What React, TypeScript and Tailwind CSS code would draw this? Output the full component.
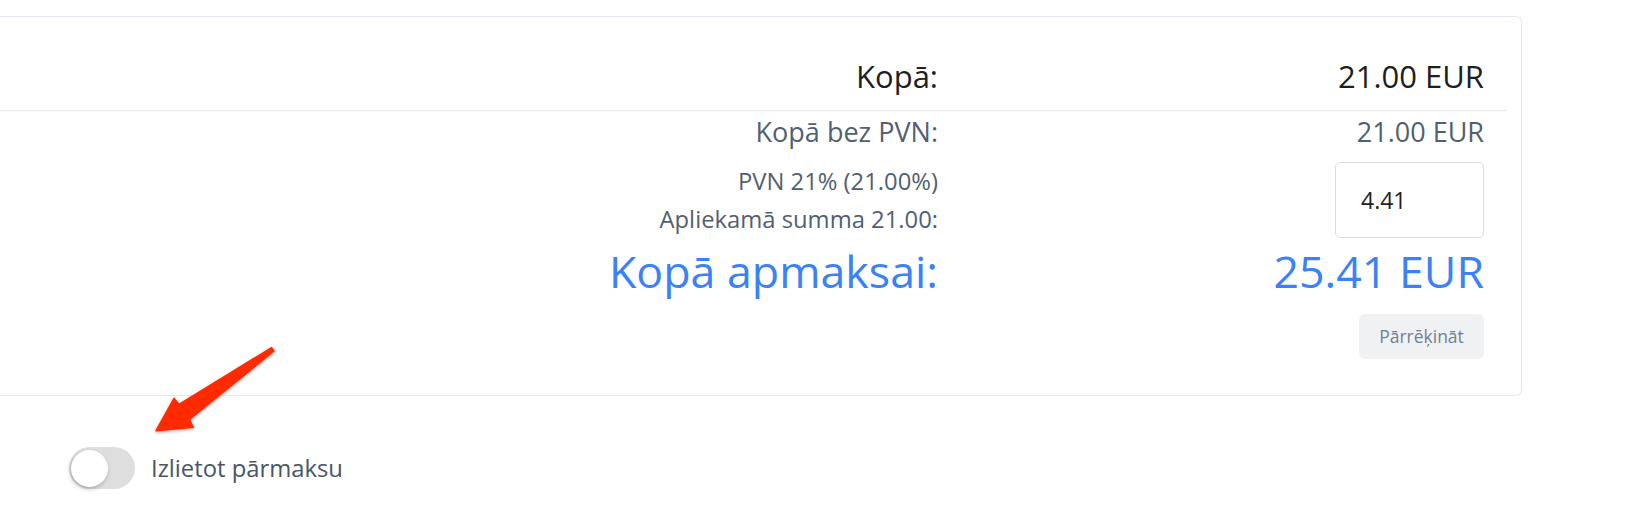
import React from "react";

export default function App() {
  return (
    <div className="relative w-[1626px] h-[516px] bg-white font-['Open_Sans',sans-serif] overflow-hidden">
      <div className="pt-4">
        <div className="w-[1522px] border border-l-0 border-[#e6e6f0] rounded-r-md bg-white pr-[14px]">
          {/* Row 1 */}
          <div className="flex border-b border-[#e8e8e8] pt-[39px] pb-[14px] pr-[23px]">
            <div className="w-[938px] text-right text-[31px] leading-[40px] text-[#1f1f1f]">Kopā:</div>
            <div className="flex-1 text-right text-[31px] leading-[40px] text-[#1f1f1f]">21.00 EUR</div>
          </div>
          {/* Row 2 */}
          <div className="flex pt-[3px] pr-[23px] h-[39px]">
            <div className="w-[938px] text-right text-[27px] leading-[36px] text-[#525f70]">Kopā bez PVN:</div>
            <div className="flex-1 text-right text-[27px] leading-[36px] text-[#525f70]">21.00 EUR</div>
          </div>
          {/* Row 3 */}
          <div className="flex mt-[12px] pr-[23px]">
            <div className="w-[938px] text-right text-[23.8px] leading-[38px] text-[#525f70]">
              <div>PVN 21% (21.00%)</div>
              <div>Apliekamā summa 21.00:</div>
            </div>
            <div className="flex-1 flex justify-end">
              <div className="w-[149px] h-[76px] border border-[#dcdcdc] rounded-[5px] bg-white flex items-center pl-[25px] text-[23px] text-[#1f1f1f]">
                4.41
              </div>
            </div>
          </div>
          {/* Row 4 */}
          <div className="flex mt-[5px] pr-[23px]">
            <div className="w-[938px] text-right text-[44.7px] leading-[56px] text-[#3b82f6]">Kopā apmaksai:</div>
            <div className="flex-1 text-right text-[44.7px] leading-[56px] text-[#3b82f6]">25.41 EUR</div>
          </div>
          {/* Row 5 */}
          <div className="flex justify-end mt-[15px] pb-[36px] pr-[23px]">
            <button className="w-[125px] h-[45px] rounded-md bg-[#f0f1f3] text-[17.5px] text-[#718096] flex items-center justify-center">
              Pārrēķināt
            </button>
          </div>
        </div>
      </div>

      {/* Toggle */}
      <div className="flex items-center gap-4 pl-[69px] mt-[51px]">
        <div className="relative w-[66px] h-[42px] rounded-full bg-[#dedede]">
          <div className="absolute left-[2px] top-[2.5px] w-[37px] h-[37px] rounded-full bg-white shadow-[-1px_2px_4px_rgba(0,0,0,0.25)]" />
        </div>
        <span className="text-[23.8px] leading-[32px] text-[#4a5568]">Izlietot pārmaksu</span>
      </div>

      {/* Annotation arrow */}
      <svg className="absolute left-0 top-0 pointer-events-none" width="1626" height="516" viewBox="0 0 1626 516">
        <defs>
          <filter id="sh" x="-20%" y="-20%" width="140%" height="140%">
            <feDropShadow dx="0" dy="1.5" stdDeviation="1.5" floodColor="#000" floodOpacity="0.3" />
          </filter>
        </defs>
        <polygon
          points="271.6,347.6 179,404.5 174,398.3 156,430.7 193.3,427.3 189.5,419.5 274,351"
          fill="#ff2a00"
          strokeLinejoin="round"
          stroke="#ff2a00"
          strokeWidth="1.5"
          filter="url(#sh)"
        />
      </svg>
    </div>
  );
}
